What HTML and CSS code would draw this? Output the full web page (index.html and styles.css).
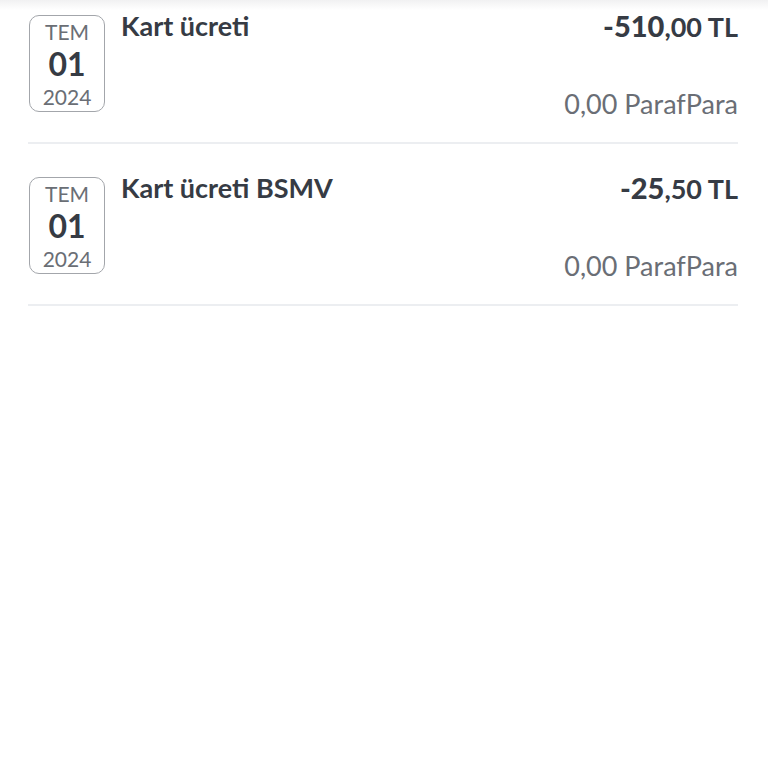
FILE: index.html
```html
<!DOCTYPE html>
<html lang="tr">
<head>
    <meta charset="UTF-8">
    <meta name="viewport" content="width=device-width, initial-scale=1.0">
    <title>Hesap Hareketleri</title>
    <link rel="stylesheet" href="styles.css">
</head>
<body>
    <div class="top-shade"></div>
    <ul class="tx-list">
        <li class="tx">
            <div class="date-box">
                <span class="month">TEM</span>
                <span class="day">01</span>
                <span class="year">2024</span>
            </div>
            <div class="tx-title">Kart ücreti</div>
            <div class="tx-amounts">
                <div class="amount"><b>-510</b>,00 TL</div>
                <div class="points">0,00 ParafPara</div>
            </div>
        </li>
        <li class="tx">
            <div class="date-box">
                <span class="month">TEM</span>
                <span class="day">01</span>
                <span class="year">2024</span>
            </div>
            <div class="tx-title">Kart ücreti BSMV</div>
            <div class="tx-amounts">
                <div class="amount"><b>-25</b>,50 TL</div>
                <div class="points">0,00 ParafPara</div>
            </div>
        </li>
    </ul>
</body>
</html>
```

FILE: styles.css
```css
body {
    margin: 0;
    background: #fff;
    font-family: Lato, "Noto Sans", sans-serif;
    color: #363b44;
}
.top-shade {
    height: 10px;
    margin-bottom: -10px;
    background: linear-gradient(to bottom, #f1f1f2, #fff);
}
.tx-list {
    list-style: none;
    margin: 0;
    padding: 0 30px 0 28px;
}
.tx {
    display: flex;
    padding: 33px 0 30px 1px;
    border-bottom: 2px solid #eceef1;
}
.tx:first-child {
    padding-top: 15px;
}
.date-box {
    width: 74px;
    height: 95px;
    border: 1px solid #a3a6ab;
    border-radius: 10px;
    display: flex;
    flex-direction: column;
    align-items: center;
    justify-content: center;
    flex-shrink: 0;
}
.month, .year {
    font-size: 21px;
    color: #6a6e75;
    line-height: 31px;
}
.day {
    font-size: 32px;
    font-weight: 700;
    line-height: 34px;
}
.tx-title {
    flex: 1;
    margin-left: 16px;
    font-size: 27px;
    font-weight: 700;
    line-height: 22px;
}
.tx-amounts {
    display: flex;
    flex-direction: column;
    justify-content: space-between;
    align-items: flex-end;
}
.amount {
    font-size: 27px;
    font-weight: 700;
    line-height: 22px;
}
.amount b {
    font-size: 29px;
    font-weight: 900;
}
.points {
    font-size: 27px;
    color: #6a6e75;
    line-height: 22px;
    margin-bottom: -3px;
}
```
